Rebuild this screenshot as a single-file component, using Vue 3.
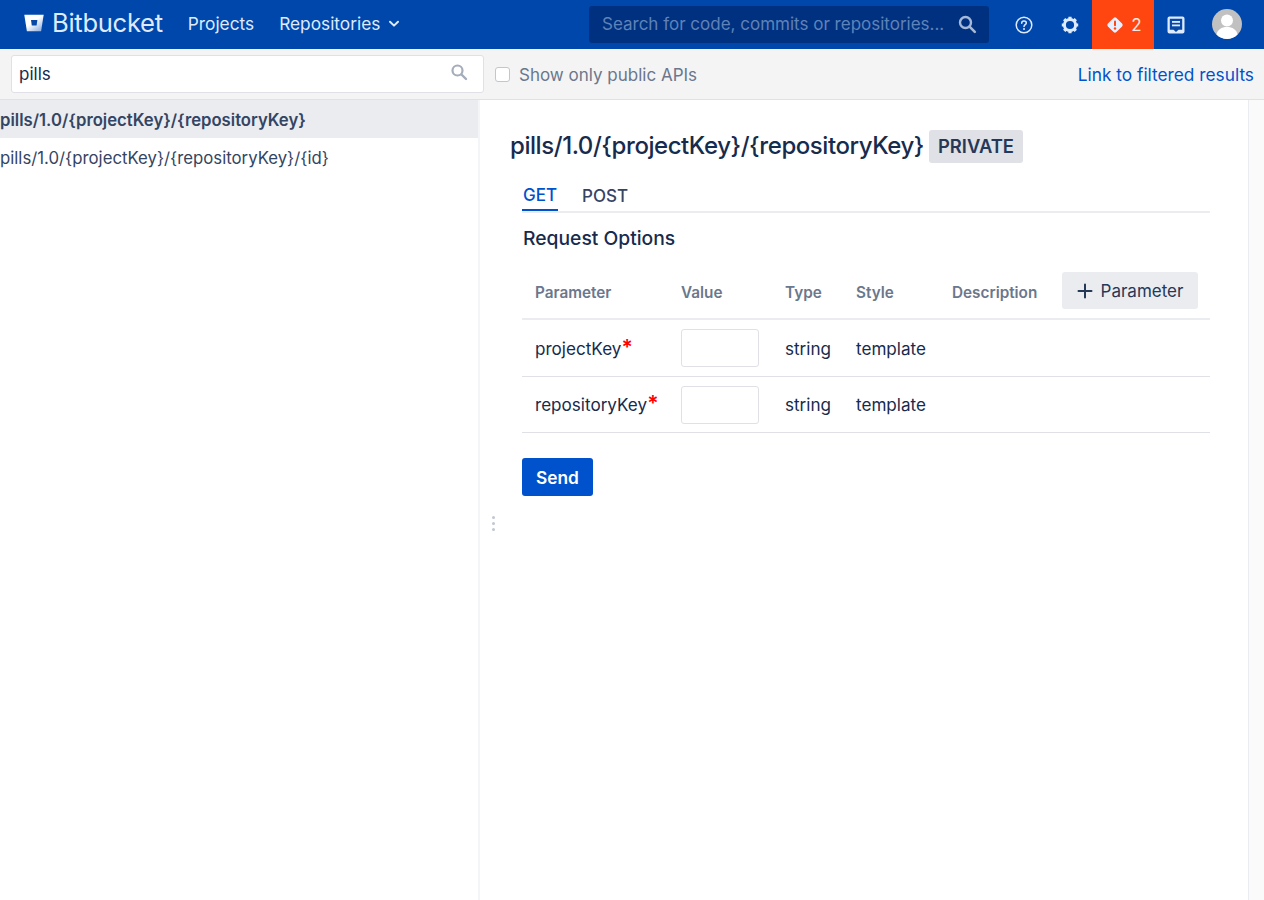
<template>
  <div class="page">
    <header class="topbar">
      <div class="logo">
        <svg class="logo-mark" width="20" height="18" viewBox="0 0 20 18">
          <defs>
            <linearGradient id="bucket-fade" x1="0.2" y1="0.1" x2="1" y2="1">
              <stop offset="0.35" stop-color="#fff" />
              <stop offset="1" stop-color="#7fa3dc" />
            </linearGradient>
          </defs>
          <path d="M0.300 0.800h19.400l-2.600 16.400H2.900z" fill="url(#bucket-fade)" />
          <path d="M7 6h6.400l-0.800 5.400H7.800z" fill="#0747a6" />
        </svg>
        <span class="logo-text">Bitbucket</span>
      </div>
      <nav class="nav">
        <a class="nav-item">Projects</a>
        <a class="nav-item">
          Repositories
          <svg class="chevron" width="12" height="8" viewBox="0 0 12 8">
            <path d="M2 1.800l4 3.800 4-3.800" fill="none" stroke="#deebff" stroke-width="2" stroke-linecap="round" stroke-linejoin="round" />
          </svg>
        </a>
      </nav>
      <div class="top-search">
        <span class="top-search-text">Search for code, commits or repositories...</span>
        <svg width="20" height="20" viewBox="0 0 20 20">
          <circle cx="8.500" cy="8.500" r="5.500" fill="none" stroke="#a5b9d8" stroke-width="2.400" />
          <path d="M12.800 12.800l5 5" stroke="#a5b9d8" stroke-width="2.600" stroke-linecap="round" />
        </svg>
      </div>
      <div class="top-icons">
        <button class="icon-btn help">
          <svg width="18" height="18" viewBox="0 0 18 18">
            <circle cx="9" cy="9" r="7.800" fill="none" stroke="#deebff" stroke-width="1.500" />
            <path d="M6.700 7.200c0-1.400 1-2.200 2.300-2.200s2.300.8 2.300 2c0 1.700-2.300 1.700-2.300 3.500" fill="none" stroke="#deebff" stroke-width="1.500" stroke-linecap="round" />
            <circle cx="9" cy="13" r="1" fill="#deebff" />
          </svg>
        </button>
        <button class="icon-btn gear">
          <svg width="20" height="20" viewBox="0 0 20 20">
            <circle cx="10" cy="10" r="5.600" fill="none" stroke="#deebff" stroke-width="3" />
            <path d="M10 1.800v2.500M10 15.700v2.500M1.800 10h2.500M15.700 10h2.500M4.200 4.200l1.800 1.800M14 14l1.800 1.800M4.200 15.800L6 14M14 6l1.800-1.800" stroke="#deebff" stroke-width="3.200" />
          </svg>
        </button>
        <button class="alert-btn">
          <svg width="18" height="18" viewBox="0 0 18 18">
            <rect x="3" y="3" width="12" height="12" rx="2" transform="rotate(45 9 9)" fill="#e6efff" />
            <rect x="8" y="4.500" width="2" height="5.800" rx="1" fill="#ff4510" />
            <circle cx="9" cy="12.500" r="1.200" fill="#ff4510" />
          </svg>
          <span>2</span>
        </button>
        <button class="icon-btn note">
          <svg width="18" height="18" viewBox="0 0 18 18">
            <path d="M2.500 0.500h13a2 2 0 0 1 2 2v13a2 2 0 0 1-2 2h-13a2 2 0 0 1-2-2v-13a2 2 0 0 1 2-2z" fill="#deebff" />
            <path d="M2.800 2.800h12.400v10.900h-3.700L9 16l-2.500-2.300H2.800z" fill="#0747a6" />
            <rect x="5" y="5" width="8" height="1.800" fill="#deebff" />
            <rect x="5" y="8.500" width="8" height="1.800" fill="#deebff" />
          </svg>
        </button>
        <div class="avatar">
          <svg width="30" height="30" viewBox="0 0 30 30">
            <circle cx="15" cy="15" r="15" fill="#c1c1c1" />
            <circle cx="15" cy="11.500" r="6" fill="#fff" />
            <path d="M4.500 25.500c1-5 5-7.500 10.500-7.500s9.500 2.500 10.500 7.500A15 15 0 0 1 15 30a15 15 0 0 1-10.500-4.500z" fill="#fff" />
          </svg>
        </div>
      </div>
    </header>

    <div class="toolbar">
      <div class="filter">
        <input class="filter-input" type="text" value="pills" />
        <svg class="filter-icon" width="18" height="18" viewBox="0 0 18 18">
          <circle cx="7.500" cy="7.500" r="5" fill="none" stroke="#a5adba" stroke-width="2.200" />
          <path d="M11.500 11.500l4.500 4.500" stroke="#a5adba" stroke-width="2.400" stroke-linecap="round" />
        </svg>
      </div>
      <label class="public-only">
        <span class="check"></span>
        Show only public APIs
      </label>
      <a class="filtered-link">Link to filtered results</a>
    </div>

    <div class="body">
      <aside class="sidebar">
        <div
          v-for="(path, index) in paths"
          :key="path"
          class="path-row"
          :class="{ active: index === 0 }"
        >
          {{ path }}
        </div>
      </aside>
      <div class="splitter">
        <span class="grip"><i></i><i></i><i></i></span>
      </div>
      <main class="content">
        <div class="title-row">
          <h1 class="title">pills/1.0/{projectKey}/{repositoryKey}</h1>
          <span class="badge">PRIVATE</span>
        </div>
        <div class="inner">
          <div class="tabs">
            <span class="tab current">GET</span>
            <span class="tab">POST</span>
          </div>
          <h2 class="section-title">Request Options</h2>
          <div class="param-table">
            <div class="param-row head">
              <span class="col-name">Parameter</span>
              <span class="col-value">Value</span>
              <span class="col-type">Type</span>
              <span class="col-style">Style</span>
              <span class="col-desc">Description</span>
              <button class="add-param">
                <svg width="16" height="16" viewBox="0 0 16 16">
                  <path d="M8 1.500v13M1.500 8h13" stroke="#253858" stroke-width="2" stroke-linecap="round" />
                </svg>
                Parameter
              </button>
            </div>
            <div v-for="param in params" :key="param" class="param-row">
              <span class="col-name">{{ param }}<em class="required">*</em></span>
              <span class="col-value"><input class="value-input" type="text" /></span>
              <span class="col-type">string</span>
              <span class="col-style">template</span>
            </div>
          </div>
          <button class="send">Send</button>
        </div>
      </main>
      <div class="rail"></div>
    </div>
  </div>
</template>

<script setup>
const paths = [
  'pills/1.0/{projectKey}/{repositoryKey}',
  'pills/1.0/{projectKey}/{repositoryKey}/{id}'
]

const params = ['projectKey', 'repositoryKey']
</script>

<style>
body {
  margin: 0;
  background: #fff;
}
</style>

<style scoped>
.page {
  width: 1264px;
  height: 900px;
  overflow: hidden;
  display: flex;
  flex-direction: column;
  font-family: Inter, "Liberation Sans", sans-serif;
  font-size: 17px;
  color: #172b4d;
}

.topbar {
  height: 49px;
  flex: none;
  background: #0047ab;
  display: flex;
  align-items: center;
  color: #deebff;
}

.logo {
  display: flex;
  align-items: center;
  margin-left: 24px;
  margin-top: -4px;
  color: #deebff;
}

.logo-mark {
  margin-right: 8px;
  margin-top: 1px;
}

.logo-text {
  font-size: 25.600px;
  font-weight: 400;
  letter-spacing: -0.3px;
}

.nav {
  display: flex;
  margin-left: 25px;
  margin-top: -2px;
  gap: 25px;
}

.nav-item {
  font-size: 17.300px;
  display: flex;
  align-items: center;
}

.chevron {
  margin-left: 8px;
}

.top-search {
  width: 400px;
  height: 37px;
  margin-left: auto;
  margin-top: -1px;
  box-sizing: border-box;
  padding: 0 12px 0 13px;
  background: #003180;
  border-radius: 3px;
  display: flex;
  align-items: center;
  justify-content: space-between;
}

.top-search-text {
  color: #5f82b8;
  font-size: 17px;
  white-space: nowrap;
}

.top-icons {
  display: flex;
  align-items: center;
  height: 100%;
  margin-left: 25px;
  padding-right: 22px;
}

.icon-btn {
  border: 0;
  padding: 0;
  background: none;
  display: flex;
  align-items: center;
  justify-content: center;
}

.help {
  width: 20px;
}

.gear {
  width: 20px;
  margin-left: 26px;
}

.alert-btn {
  height: 49px;
  width: 62px;
  margin-left: 12px;
  border: 0;
  padding: 0 0 0 2px;
  background: #ff4510;
  color: #ffe9e0;
  font-family: inherit;
  font-size: 17px;
  display: flex;
  align-items: center;
  justify-content: center;
  gap: 7px;
}

.note {
  width: 18px;
  margin-left: 13px;
}

.avatar {
  margin-left: 27px;
  width: 30px;
  height: 30px;
  margin-top: -1px;
}

.toolbar {
  height: 51px;
  flex: none;
  box-sizing: border-box;
  background: #f4f4f4;
  border-bottom: 1px solid #dfe1e6;
  display: flex;
  align-items: center;
  padding: 0 10px 0 11px;
}

.filter {
  position: relative;
  width: 473px;
}

.filter-input {
  display: block;
  width: 100%;
  height: 38px;
  box-sizing: border-box;
  border: 1px solid #dfe1e6;
  border-radius: 3px;
  background: #fff;
  padding: 0 7px;
  font-family: inherit;
  font-size: 17px;
  color: #172b4d;
  outline: none;
}

.filter-icon {
  position: absolute;
  right: 16px;
  top: 8px;
}

.public-only {
  display: flex;
  align-items: center;
  margin-left: 11px;
  margin-top: 1px;
  color: #6b778c;
  font-size: 17px;
}

.check {
  width: 13px;
  height: 13px;
  border: 1px solid #c1c7d0;
  border-radius: 3px;
  background: #fff;
  margin-right: 9px;
}

.filtered-link {
  margin-left: auto;
  color: #0052cc;
  font-size: 17.300px;
}

.body {
  flex: 1;
  display: flex;
  min-height: 0;
}

.sidebar {
  width: 478px;
  flex: none;
}

.path-row {
  height: 38px;
  box-sizing: border-box;
  padding-top: 2px;
  display: flex;
  align-items: center;
  font-size: 16.750px;
  color: #344563;
  white-space: nowrap;
}

.path-row.active {
  background: #ebecf0;
  font-size: 16.700px;
  font-weight: 600;
}

.splitter {
  width: 2px;
  flex: none;
  background: #f4f5f7;
  position: relative;
}

.grip {
  position: absolute;
  left: 14px;
  top: 416px;
  display: flex;
  flex-direction: column;
  gap: 3px;
}

.grip i {
  width: 3px;
  height: 3px;
  border-radius: 50%;
  background: #c1c7d0;
}

.content {
  flex: 1;
  min-width: 0;
  padding: 28px 38px 0 30px;
}

.title-row {
  display: flex;
  align-items: center;
  height: 34px;
}

.title {
  margin: 0;
  font-size: 24px;
  font-weight: 500;
  letter-spacing: -0.44px;
  color: #172b4d;
}

.badge {
  margin-left: 5px;
  margin-top: 2px;
  height: 33px;
  padding: 0 9px;
  display: flex;
  align-items: center;
  background: #dfe1e6;
  border-radius: 3px;
  font-size: 18.400px;
  font-weight: 600;
  color: #253858;
}

.inner {
  margin-left: 12px;
}

.tabs {
  display: flex;
  margin-top: 18px;
  height: 31px;
  border-bottom: 2px solid #ebecf0;
  gap: 23px;
}

.tab {
  font-size: 17px;
  font-weight: 500;
  color: #344563;
  height: 31px;
  box-sizing: border-box;
  padding: 0 1px;
  display: flex;
  align-items: center;
}

.tab.current {
  color: #0052cc;
  border-bottom: 2px solid #0052cc;
}

.section-title {
  margin: 13px 0 0 1px;
  font-size: 19.300px;
  font-weight: 500;
  line-height: 24px;
  color: #172b4d;
}

.param-table {
  margin-top: 14px;
}

.param-row {
  display: flex;
  align-items: center;
  height: 56px;
  border-bottom: 1px solid #dfe1e6;
  padding-left: 13px;
  font-size: 17.100px;
}

.param-row:last-child {
  height: 55px;
}

.param-row.head {
  height: 54px;
  border-bottom: 2px solid #ebecf0;
  font-size: 15.300px;
  font-weight: 600;
  color: #6b778c;
}

.param-row.head > span {
  padding-top: 2px;
}

.col-name {
  width: 146px;
}

.col-value {
  width: 104px;
}

.col-type {
  width: 71px;
}

.col-style {
  width: 96px;
}

.col-desc {
  width: 110px;
}

.required {
  color: #ff0000;
  font-style: normal;
  font-weight: 600;
  font-size: 21px;
  line-height: 0;
}

.value-input {
  display: block;
  width: 78px;
  height: 38px;
  box-sizing: border-box;
  border: 1px solid #dfe1e6;
  border-radius: 3px;
  outline: none;
}

.add-param {
  width: 136px;
  height: 37px;
  margin-top: -1px;
  border: 0;
  border-radius: 3px;
  background: #ebecf0;
  color: #253858;
  font-family: inherit;
  font-size: 17px;
  display: flex;
  align-items: center;
  justify-content: center;
  gap: 8px;
  padding: 0;
}

.send {
  display: block;
  margin-top: 25px;
  width: 71px;
  height: 38px;
  border: 0;
  border-radius: 3px;
  background: #0052cc;
  color: #fff;
  font-family: inherit;
  font-size: 17.300px;
  font-weight: 600;
  padding: 0;
}

.rail {
  width: 15px;
  flex: none;
  background: #fafafa;
  border-left: 1px solid #ebecf0;
}
</style>
